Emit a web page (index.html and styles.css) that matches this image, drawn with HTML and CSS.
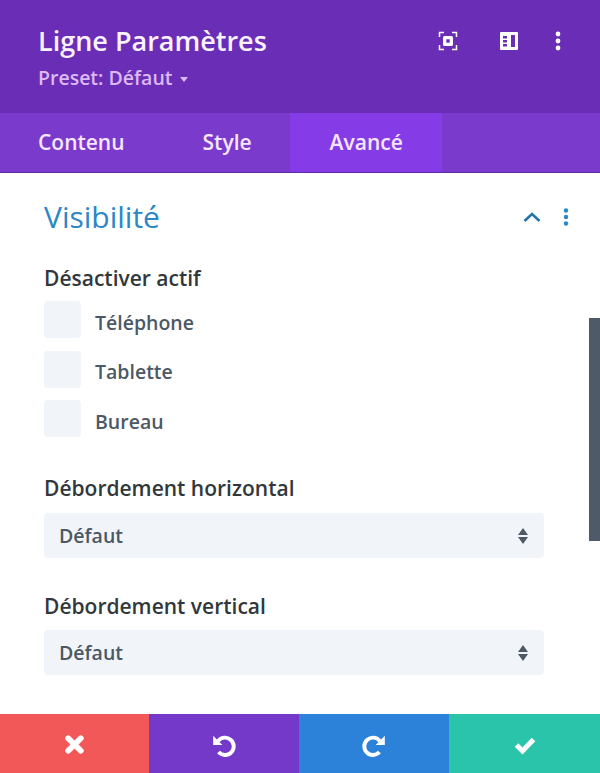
FILE: index.html
```html
<!DOCTYPE html>
<html lang="fr">
<head>
  <meta charset="UTF-8" />
  <title>Ligne Paramètres</title>
  <link rel="stylesheet" href="styles.css">
</head>
<body>
  <div class="modal">
    <!-- HEADER -->
    <div class="modal-head">
      <div class="head-text">
        <h1>Ligne Paramètres</h1>
        <div class="preset">Preset: Défaut <span class="caret"></span></div>
      </div>
      <div class="head-icons">
        <svg class="icon-focus" width="20" height="20" viewBox="0 0 20 20" fill="none" stroke="#fff" stroke-width="1.5">
          <path d="M6 1.5H1.5V6M14 1.5h4.5V6M6 18.5H1.5V14M14 18.5h4.5V14"/>
          <rect x="5" y="5" width="10" height="10" rx="1.5" fill="#fff" stroke="none"/>
          <rect x="8.3" y="8.3" width="3.4" height="3.4" fill="#6a2db6" stroke="none"/>
        </svg>
        <svg width="20" height="20" viewBox="0 0 20 20">
          <path fill="#fff" fill-rule="evenodd" d="M2 1h16a1 1 0 0 1 1 1v16a1 1 0 0 1-1 1H2a1 1 0 0 1-1-1V2a1 1 0 0 1 1-1zm10 3v12h4V4zM4 5v2.5h4V5zm0 4v2.500h4V9zm0 4v2.500h4V13z"/>
        </svg>
        <svg width="6" height="20" viewBox="0 0 6 20" fill="#fff">
          <circle cx="3" cy="3" r="2.400"/><circle cx="3" cy="10" r="2.400"/><circle cx="3" cy="17" r="2.400"/>
        </svg>
      </div>
    </div>

    <!-- TABS -->
    <div class="tabs">
      <a class="tab">Contenu</a>
      <a class="tab">Style</a>
      <a class="tab active">Avancé</a>
    </div>

    <!-- BODY -->
    <div class="modal-body">
      <div class="toggle-head">
        <h2>Visibilité</h2>
        <div class="toggle-icons">
          <svg width="18" height="10" viewBox="0 0 18 10" fill="none" stroke="#2276ae" stroke-width="2.600">
            <path d="M1.500 9L9 2l7.500 7"/>
          </svg>
          <svg width="6" height="18" viewBox="0 0 6 18" fill="#2b87c7">
            <circle cx="3" cy="2.500" r="2.200"/><circle cx="3" cy="9" r="2.200"/><circle cx="3" cy="15.500" r="2.200"/>
          </svg>
        </div>
      </div>

      <div class="field field-checks">
        <label class="field-label">Désactiver actif</label>
        <div class="checks">
          <div class="check"><span class="box"></span><span class="check-text">Téléphone</span></div>
          <div class="check"><span class="box"></span><span class="check-text">Tablette</span></div>
          <div class="check"><span class="box"></span><span class="check-text">Bureau</span></div>
        </div>
      </div>

      <div class="field field-h">
        <label class="field-label">Débordement horizontal</label>
        <div class="select">Défaut <span class="arrows"><i class="up"></i><i class="down"></i></span></div>
      </div>

      <div class="field field-v">
        <label class="field-label">Débordement vertical</label>
        <div class="select">Défaut <span class="arrows"><i class="up"></i><i class="down"></i></span></div>
      </div>
    </div>

    <div class="scrollbar"></div>

    <!-- FOOTER BUTTONS -->
    <div class="modal-foot">
      <button class="foot-btn cancel">
        <svg width="21" height="21" viewBox="0 0 20 20"><path d="M4 4l12 12M16 4L4 16" stroke="#fff" stroke-width="5.500" stroke-linecap="round"/></svg>
      </button>
      <button class="foot-btn undo">
        <svg width="26" height="26" viewBox="0 0 24 24" fill="none">
          <path d="M6.500 8.500A8 8 0 1 1 7 18.500" stroke="#fff" stroke-width="3.600"/>
          <path d="M2 3.500V12h8.500z" fill="#fff"/>
        </svg>
      </button>
      <button class="foot-btn redo">
        <svg width="26" height="26" viewBox="0 0 24 24" fill="none">
          <path d="M17.500 8.500A8 8 0 1 0 17 18.500" stroke="#fff" stroke-width="3.600"/>
          <path d="M22 3.500V12h-8.500z" fill="#fff"/>
        </svg>
      </button>
      <button class="foot-btn save">
        <svg width="24" height="20" viewBox="0 0 24 20" fill="none"><path d="M3.500 10l6 6L20.500 4.500" stroke="#fff" stroke-width="5"/></svg>
      </button>
    </div>
  </div>
</body>
</html>
```

FILE: styles.css
```css
* {
  box-sizing: border-box;
}
body {
  margin: 0;
  font-family: 'Open Sans', sans-serif;
  background-color: #fff;
  overflow: hidden;
}
.modal {
  position: relative;
  display: flex;
  flex-direction: column;
  width: 600px;
  height: 773px;
}

/* Header */
.modal-head {
  display: flex;
  justify-content: space-between;
  height: 113px;
  padding: 23px 39px 0 38px;
  background-color: #6a2db6;
}
.modal-head h1 {
  margin: 0;
  color: #fbf2ff;
  font-size: 27px;
  line-height: 36px;
  font-weight: 600;
}
.preset {
  margin-top: 6px;
  color: #dcb9f5;
  font-size: 19.5px;
  line-height: 26px;
  font-weight: 600;
}
.caret {
  display: inline-block;
  margin-left: 2px;
  vertical-align: 3px;
  border-top: 5px solid #dcb9f5;
  border-left: 4px solid transparent;
  border-right: 4px solid transparent;
}
.head-icons {
  display: flex;
  align-items: flex-start;
  gap: 36px;
  padding-top: 8px;
}
.icon-focus {
  margin-right: 5px;
}

/* Tabs */
.tabs {
  display: flex;
  height: 60px;
  background-color: #7a3acb;
  border-bottom: 1px solid #5f2a9f;
}
.tab {
  padding: 15px 38px 0 40px;
  color: #f6e6ff;
  font-size: 21px;
  line-height: 28px;
  font-weight: 600;
}
.tab:first-child {
  padding-left: 38px;
}
.tab.active {
  width: 152px;
  background-color: #853ce6;
}

/* Body */
.modal-body {
  flex: 1;
  padding: 0 31px 0 44px;
}
.toggle-head {
  display: flex;
  justify-content: space-between;
  align-items: center;
  height: 42px;
  margin-top: 23px;
}
.toggle-head h2 {
  margin: 0;
  color: #2b87c7;
  font-size: 30px;
  line-height: 36px;
  font-weight: 400;
}
.toggle-icons {
  display: flex;
  align-items: center;
  gap: 22px;
}
.field-label {
  display: block;
  color: #32373c;
  font-size: 21px;
  line-height: 28px;
  font-weight: 600;
}
.field-checks {
  margin-top: 26px;
}
.checks {
  display: flex;
  flex-direction: column;
  gap: 12.5px;
  margin-top: 9px;
}
.check {
  display: flex;
  align-items: center;
  gap: 14px;
  color: #4c5866;
  font-size: 19.5px;
  font-weight: 600;
}
.check-text {
  padding-top: 5px;
}
.box {
  width: 37px;
  height: 37px;
  background-color: #f1f5f9;
  border-radius: 4px;
}
.field-h {
  margin-top: 37px;
}
.field-v {
  margin-top: 34px;
}
.select {
  display: flex;
  justify-content: space-between;
  align-items: center;
  width: 500px;
  height: 45px;
  margin-top: 11px;
  padding: 0 16px 0 15px;
  background-color: #f1f5f9;
  border-radius: 4px;
  color: #4c5866;
  font-size: 19.5px;
  font-weight: 600;
}
.field-v .select {
  margin-top: 10px;
}
.arrows {
  display: flex;
  flex-direction: column;
  gap: 2px;
}
.arrows i {
  display: block;
  border-left: 5px solid transparent;
  border-right: 5px solid transparent;
}
.arrows .up {
  border-bottom: 7px solid #4c5866;
}
.arrows .down {
  border-top: 7px solid #4c5866;
}
.scrollbar {
  position: absolute;
  top: 318px;
  right: 0;
  width: 11px;
  height: 223px;
  background-color: #4f5a68;
}

/* Footer */
.modal-foot {
  display: flex;
  height: 59px;
}
.foot-btn {
  display: flex;
  width: 150px;
  justify-content: center;
  align-items: center;
  padding: 2px 0 0;
  border: none;
}
.foot-btn.cancel {
  width: 149px;
  background-color: #f25858;
}
.foot-btn.undo {
  background-color: #7539c9;
}
.foot-btn.redo {
  background-color: #2b82d8;
}
.foot-btn.save {
  width: 151px;
  background-color: #29c4a9;
}
```
